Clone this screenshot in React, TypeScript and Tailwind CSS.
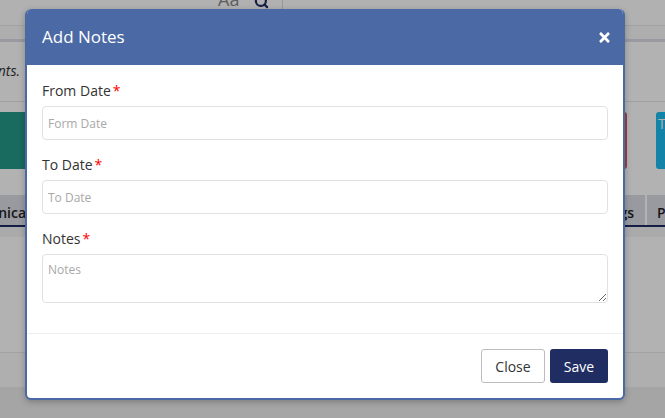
import { Search } from "lucide-react";
import { FaTimes } from "react-icons/fa";

const fontClass = "font-['Open_Sans','Liberation_Sans',sans-serif]";

function Field({ label, placeholder }: { label: string; placeholder: string }) {
	return (
		<div className="mb-[14px] flex flex-col">
			<label className="mb-[5px] h-[21px] text-[14px] leading-[21px] text-[#333]">
				{label}
				<span className="ml-[2px] text-[#f00]">*</span>
			</label>
			<input
				type="text"
				placeholder={placeholder}
				className="h-[34px] rounded border border-[#e1e1e1] bg-white px-[5px] text-[12px] outline-none placeholder:text-[#a8a8a8]"
			/>
		</div>
	);
}

function BackgroundPage() {
	return (
		<div className="flex h-[418px] flex-col overflow-hidden bg-white">
			<div className="flex h-[26px] shrink-0 items-start border-b border-[#e8e8e8] bg-[#fefefe]">
				<span className="-mt-[14px] ml-[218px] text-[18px] leading-[27px] text-[#888]">Aa</span>
				<Search className="-mt-[6px] ml-[15px] h-[15px] w-[15px] text-[#1f2d63]" strokeWidth={3.5} />
				<div className="ml-[13px] h-[10px] border-r border-[#dcdcdc]" />
			</div>
			<div className="h-[13px] shrink-0 bg-[#fafafa]" />
			<div className="h-[3px] shrink-0 bg-[#dcdce8]" />
			<div className="flex h-[60px] shrink-0 items-center justify-start border-b border-[#e4e4e4]">
				<div className="flex w-[20px] justify-end overflow-hidden whitespace-nowrap pb-[3px] text-[14px] italic text-[#333]">
					nts.
				</div>
			</div>
			<div className="mt-[10px] flex h-[57px] shrink-0 justify-between">
				<div className="w-[26px] bg-[#259989]" />
				<div className="flex gap-[29px]">
					<div className="w-[10px] rounded-r-[3px] bg-[#df5b5b]" />
					<div className="w-[9px] overflow-hidden rounded-l-[3px] bg-[#1cbdf0] pl-[2px] pt-[4px] text-[14px] leading-[16px] text-white">
						T
					</div>
				</div>
			</div>
			<div className="mt-[26px] flex h-[32px] shrink-0 justify-between border-b-2 border-[#1f2d63] text-[14px] font-semibold leading-[36px] text-[#222]">
				<div className="flex w-[26px] justify-end overflow-hidden whitespace-nowrap bg-[#dcdde6]">
					unica
				</div>
				<div className="flex gap-[2px]">
					<div className="flex w-[21px] justify-end overflow-hidden whitespace-nowrap bg-[#dcdde6] pr-[11px]">
						gs
					</div>
					<div className="w-[18px] overflow-hidden bg-[#dcdde6] pl-[10px]">P</div>
				</div>
			</div>
			<div className="h-[10px] shrink-0 bg-[#f4f4f4]" />
			<div className="h-[116px] shrink-0 border-b border-[#e8e8e8]" />
			<div className="h-[34px] shrink-0 bg-[#fbfbfb]" />
			<div className="flex-1 bg-[#ededed]" />
		</div>
	);
}

export default function App() {
	return (
		<div className={`relative h-[418px] w-[665px] overflow-hidden ${fontClass}`}>
			<BackgroundPage />
			<div className="absolute inset-0 bg-black/30" />

			<div className="absolute left-[25px] top-[9px] flex w-[600px] flex-col overflow-hidden rounded-[6px] border-2 border-t-0 border-[#4b69a5] bg-white shadow-[0_2px_6px_rgba(0,0,0,0.25)]">
				<div className="-mx-[2px] flex h-[56px] items-center justify-between bg-[#4b69a5] pl-[17px] pr-[13px] text-white">
					<h2 className="text-[17px] font-medium">Add Notes</h2>
					<FaTimes size={15} />
				</div>

				<div className="flex flex-col px-[15px] pb-[30px] pt-[15px]">
					<Field label="From Date" placeholder="Form Date" />
					<Field label="To Date" placeholder="To Date" />
					<div className="flex flex-col">
						<label className="mb-[5px] h-[21px] text-[14px] leading-[21px] text-[#333]">
							Notes
							<span className="ml-[2px] text-[#f00]">*</span>
						</label>
						<textarea
							placeholder="Notes"
							className="block h-[49px] rounded border border-[#e1e1e1] bg-white px-[5px] py-[6px] text-[12px] outline-none placeholder:text-[#a8a8a8]"
						/>
					</div>
				</div>

				<div className="flex justify-end gap-[5px] border-t border-[#eeeeee] p-[15px]">
					<button
						type="button"
						className="h-[34px] w-[64px] rounded-[3px] border border-[#bdbdbd] bg-white text-[14px] text-[#333]"
					>
						Close
					</button>
					<button
						type="button"
						className="h-[34px] w-[58px] rounded-[3px] bg-[#1f2d63] text-[14px] font-medium text-white"
					>
						Save
					</button>
				</div>
			</div>
		</div>
	);
}
